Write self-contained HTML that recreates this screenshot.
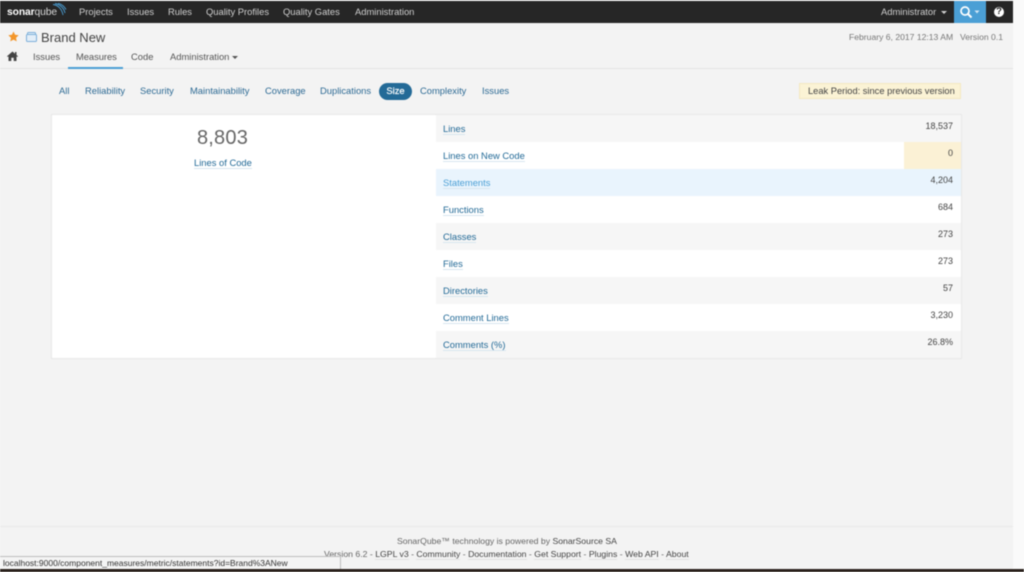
<!DOCTYPE html>
<html>
<head>
<meta charset="utf-8">
<style>
html,body{margin:0;padding:0;width:1024px;height:572px;overflow:hidden;background:#fafafa;}
body{position:relative;font-family:"Liberation Sans",Arial,sans-serif;font-size:9.4px;color:#444;}
#p{position:absolute;left:0;top:0;width:1024px;height:572px;filter:blur(0.4px);}
.a{position:absolute;white-space:nowrap;line-height:12px;}
.b{position:absolute;}
.n{color:#cfcfcf;top:6px;font-size:9.4px;}
.t{color:#555;top:51px;}
.f{color:#2d6a94;top:85px;}
.m{left:443px;color:#236a97;border-bottom:1px solid #d8e6f0;line-height:11px;}
.v{color:#444;text-align:right;right:71px;font-size:9px;}
.l{color:#444;border-bottom:1px solid #e2e2e2;line-height:11px;}
</style>
</head>
<body>
<div id="p">
<div class="b" style="left:0;top:0;width:1013px;height:569px;background:#f3f3f3"></div>
<div class="b" style="left:0;top:1px;width:1013px;height:22px;background:#262626"></div>
<div class="a" style="left:7px;top:7px;font-size:10.3px;color:#fff;font-weight:bold;letter-spacing:-.1px">sonar<span style="font-weight:normal;color:#d8d8d8">qube</span></div>
<svg class="b" style="left:51px;top:3px" width="16" height="13" viewBox="0 0 16 13" fill="none" stroke="#4b9fd5" stroke-width=".9"><path d="M2 1.500C7 2 11 6 12 12"/><path d="M4 .5C9 1.500 13 5 14 10"/><path d="M7 .3C10 1 13 3 15 6.500"/></svg>
<span class="a n" style="left:79px">Projects</span>
<span class="a n" style="left:127px">Issues</span>
<span class="a n" style="left:168px">Rules</span>
<span class="a n" style="left:206px">Quality Profiles</span>
<span class="a n" style="left:283px">Quality Gates</span>
<span class="a n" style="left:355px">Administration</span>
<span class="a n" style="left:881px">Administrator</span>
<div class="b" style="left:941px;top:11px;border:3px solid transparent;border-top:3px solid #cfcfcf;border-bottom:0"></div>
<div class="b" style="left:954px;top:1px;width:32px;height:22px;background:#4b9fd5"></div>
<svg class="b" style="left:959px;top:5px" width="22" height="14" viewBox="0 0 22 14" fill="none"><circle cx="6" cy="6" r="4" stroke="#fff" stroke-width="1.7"/><path d="M9 9l3.500 3.500" stroke="#fff" stroke-width="2"/><path d="M15.500 5.500h5l-2.500 3z" fill="#cfe5f5"/></svg>
<div class="b" style="left:994px;top:7px;width:10px;height:10px;border-radius:50%;background:#fff"></div>
<div class="a" style="left:994px;top:6px;width:10px;text-align:center;font-weight:bold;font-size:9.500px;color:#262626">?</div>

<svg class="b" style="left:7.500px;top:31px" width="11" height="11" viewBox="0 0 24 24"><path d="M12 1l3.400 7.300 7.900 1-5.800 5.500 1.500 7.900-7-3.900-7 3.900 1.500-7.900L.7 9.300l7.900-1z" fill="#f3962a"/></svg>
<svg class="b" style="left:26px;top:32px" width="11" height="10" viewBox="0 0 11 10" fill="#e3eef8" stroke="#7db0da" stroke-width="1"><path d="M1.500 2.500V1.500q0-1 1-1h6q1 0 1 1v1z"/><rect x=".5" y="2.500" width="10" height="7" rx="1"/></svg>
<span class="a" style="left:41px;top:30px;font-size:13px;line-height:15px;color:#444">Brand New</span>
<span class="a" style="left:849px;top:31px;color:#777;font-size:8.600px">February 6, 2017 12:13 AM</span>
<span class="a" style="left:960px;top:31px;color:#777;font-size:8.600px">Version 0.1</span>

<svg class="b" style="left:7px;top:51px" width="11" height="10" viewBox="0 0 11 10"><path d="M5.500 .5L8 2.700V1h1.500v3L11 5.300l-.7.700-.8-.7V10H6.700V6.800H4.300V10H1.500V5.300l-.8.700L0 5.300 5.500.5z" fill="#444"/></svg>
<span class="a t" style="left:33px">Issues</span>
<span class="a t" style="left:76px;letter-spacing:-.05px">Measures</span>
<span class="a t" style="left:131px">Code</span>
<span class="a t" style="left:170px">Administration</span>
<div class="b" style="left:232px;top:56px;border:3px solid transparent;border-top:3px solid #555;border-bottom:0"></div>
<div class="b" style="left:0;top:68px;width:1013px;height:1px;background:#e3e3e3"></div>
<div class="b" style="left:68px;top:67px;width:55px;height:2px;background:#4b9fd5"></div>

<span class="a f" style="left:59px">All</span>
<span class="a f" style="left:85px">Reliability</span>
<span class="a f" style="left:140px">Security</span>
<span class="a f" style="left:190px">Maintainability</span>
<span class="a f" style="left:265px">Coverage</span>
<span class="a f" style="left:320px">Duplications</span>
<div class="b" style="left:379px;top:83px;width:33px;height:17px;border-radius:9px;background:#236a97"></div>
<span class="a f" style="left:379px;width:33px;text-align:center;color:#fff;-webkit-text-stroke:.2px #fff">Size</span>
<span class="a f" style="left:420px">Complexity</span>
<span class="a f" style="left:482px">Issues</span>
<div class="b" style="left:799px;top:83px;width:160px;height:14px;background:#fbf3d5;border:1px solid #f3e8c2"></div>
<span class="a" style="left:808px;top:85px;color:#444;font-size:9.300px">Leak Period: since previous version</span>

<div class="b" style="left:52px;top:115px;width:909px;height:243px;background:#fff;box-shadow:0 0 0 1px #e8e8e8"></div>
<div class="b" style="left:436px;top:115px;width:525px;height:27px;background:#f6f6f6"></div>
<div class="b" style="left:904px;top:142px;width:57px;height:27px;background:#fbf1d5"></div>
<div class="b" style="left:436px;top:169px;width:525px;height:27px;background:#e9f4fd"></div>
<div class="b" style="left:436px;top:223px;width:525px;height:27px;background:#f6f6f6"></div>
<div class="b" style="left:436px;top:277px;width:525px;height:27px;background:#f6f6f6"></div>
<div class="b" style="left:436px;top:331px;width:525px;height:27px;background:#f6f6f6"></div>

<div class="a" style="left:52px;top:127px;width:341px;text-align:center;font-size:20px;line-height:23px;color:#666;letter-spacing:.2px">8,803</div>
<span class="a" style="left:194px;top:157px;color:#236a97;border-bottom:1px solid #d8e6f0;line-height:11px">Lines of Code</span>

<span class="a m" style="top:123px">Lines</span><span class="a v" style="top:120px">18,537</span>
<span class="a m" style="top:150px">Lines on New Code</span><span class="a v" style="top:147px">0</span>
<span class="a m" style="top:177px;color:#4b9fd5">Statements</span><span class="a v" style="top:174px">4,204</span>
<span class="a m" style="top:204px">Functions</span><span class="a v" style="top:201px">684</span>
<span class="a m" style="top:231px">Classes</span><span class="a v" style="top:228px">273</span>
<span class="a m" style="top:258px">Files</span><span class="a v" style="top:255px">273</span>
<span class="a m" style="top:285px">Directories</span><span class="a v" style="top:282px">57</span>
<span class="a m" style="top:312px">Comment Lines</span><span class="a v" style="top:309px">3,230</span>
<span class="a m" style="top:339px">Comments (%)</span><span class="a v" style="top:336px">26.8%</span>

<div class="b" style="left:0;top:526px;width:1013px;height:1px;background:#e8e8e8"></div>
<div class="a" style="left:397px;top:535px;color:#666;font-size:8.660px">SonarQube™ technology is powered by <span style="color:#444">SonarSource SA</span></div>
<div class="a" style="left:324px;top:548px;color:#666;font-size:8.700px">Version 6.2 - <span class="l">LGPL v3</span> - <span class="l">Community</span> - <span class="l">Documentation</span> - <span class="l">Get Support</span> - <span class="l">Plugins</span> - <span class="l">Web API</span> - <span class="l">About</span></div>

<div class="b" style="left:0;top:556px;width:340px;height:12px;background:#f4f4f4;border:1px solid #bdbdbd;border-left:0"></div>
<span class="a" style="left:3px;top:557px;color:#333;font-size:8.500px">localhost:9000/component_measures/metric/statements?id=Brand%3ANew</span>
<div class="b" style="left:0;top:569px;width:1024px;height:3px;background:#2a211c"></div>
</div>
</body>
</html>
